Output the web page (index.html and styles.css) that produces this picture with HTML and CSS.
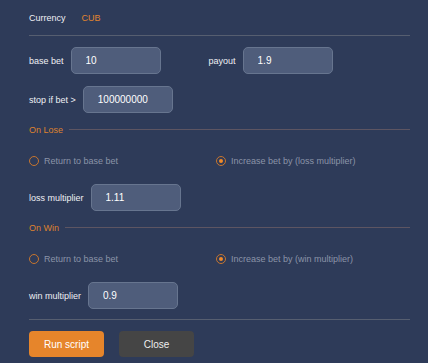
FILE: index.html
```html
<!DOCTYPE html>
<html>
<head>
  <link rel="stylesheet" href="styles.css">
</head>
<body>
  <div class="panel">
    <div class="header">
      <span class="label">Currency</span>
      <span class="currency">CUB</span>
    </div>

    <div class="row first">
      <div class="field">
        <label>base bet</label>
        <input type="text" value="10">
      </div>
      <div class="field">
        <label>payout</label>
        <input type="text" value="1.9">
      </div>
    </div>

    <div class="row">
      <div class="field">
        <label>stop if bet &gt;</label>
        <input type="text" value="100000000">
      </div>
    </div>

    <div class="section">On Lose</div>
    <div class="radios">
      <label class="radio"><span class="dot"></span>Return to base bet</label>
      <label class="radio"><span class="dot checked"></span>Increase bet by (loss multiplier)</label>
    </div>
    <div class="row">
      <div class="field">
        <label>loss multiplier</label>
        <input type="text" value="1.11">
      </div>
    </div>

    <div class="section">On Win</div>
    <div class="radios">
      <label class="radio"><span class="dot"></span>Return to base bet</label>
      <label class="radio"><span class="dot checked"></span>Increase bet by (win multiplier)</label>
    </div>
    <div class="row">
      <div class="field">
        <label>win multiplier</label>
        <input type="text" value="0.9">
      </div>
    </div>

    <div class="actions">
      <button class="btn run">Run script</button>
      <button class="btn close">Close</button>
    </div>
  </div>
</body>
</html>
```

FILE: styles.css
```css
html, body {
  margin: 0;
  height: 100%;
  background: #2e3b59;
}
body {
  font-family: "Liberation Sans", Arial, sans-serif;
  font-size: 9px;
  color: #eef0f4;
}
.panel {
  padding: 0 18px 0 29px;
}
.header {
  height: 36px;
  display: flex;
  align-items: center;
  gap: 16px;
  border-bottom: 1px solid #565e70;
  padding-top: 1px;
  box-sizing: border-box;
}
.currency {
  color: #e0842e;
}
.row {
  display: flex;
  align-items: center;
  gap: 48px;
  margin-top: 12px;
}
.row.first {
  margin-top: 11px;
}
.radios + .row {
  margin-top: 16px;
}
.field {
  display: flex;
  align-items: center;
  gap: 7px;
}
.field label {
  white-space: nowrap;
}
input[type="text"] {
  width: 90px;
  height: 27px;
  box-sizing: border-box;
  padding: 0 14px;
  background: #4f5d7b;
  border: 1px solid #67758f;
  border-radius: 5px;
  color: #ffffff;
  font-family: "Liberation Sans", Arial, sans-serif;
  font-size: 10px;
  outline: none;
}
.section {
  display: flex;
  align-items: center;
  gap: 6px;
  height: 14px;
  margin-top: 10px;
  color: #dd812f;
}
.section::after {
  content: "";
  flex: 1;
  height: 1px;
  margin-top: -1px;
  background: #5d5562;
}
.radios {
  display: grid;
  grid-template-columns: 187px 1fr;
  height: 14px;
  margin-top: 17px;
}
.radio {
  display: flex;
  align-items: center;
  gap: 5px;
  color: #8b94a8;
}
.dot {
  width: 10px;
  height: 10px;
  box-sizing: border-box;
  border: 1.5px solid #c7752e;
  border-radius: 50%;
  display: flex;
  align-items: center;
  justify-content: center;
}
.dot.checked::after {
  content: "";
  width: 4px;
  height: 4px;
  border-radius: 50%;
  background: #f08a2a;
}
.actions {
  display: flex;
  gap: 15px;
  margin-top: 10px;
  padding-top: 11px;
  border-top: 1px solid #565e70;
}
.btn {
  width: 75px;
  height: 26px;
  border: none;
  border-radius: 4px;
  font-family: "Liberation Sans", Arial, sans-serif;
  font-size: 10px;
  color: #ffffff;
}
.run {
  background: #e6852b;
}
.close {
  background: #454545;
  color: #eeeeee;
}
```
